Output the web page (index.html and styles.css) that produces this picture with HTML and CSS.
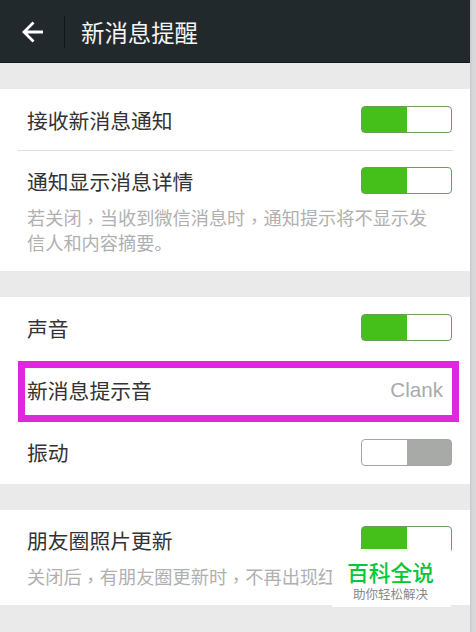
FILE: index.html
```
<!DOCTYPE html>
<html lang="zh-CN">
<head>
  <meta charset="UTF-8">
  <meta name="viewport" content="width=device-width, initial-scale=1.0">
  <title>新消息提醒</title>
  <link rel="stylesheet" href="styles.css">
</head>
<body>
  <div class="screen">
    <header>
      <svg class="back" width="22" height="22" viewBox="0 0 22 22">
        <path d="M21 11H2M11.5 1.5L2 11l9.5 9.5" />
      </svg>
      <h1>新消息提醒</h1>
    </header>

    <section class="group">
      <div class="row divided">
        <span class="label">接收新消息通知</span>
        <span class="switch on"></span>
      </div>
      <div class="row tight">
        <span class="label">通知显示消息详情</span>
        <span class="switch on"></span>
      </div>
      <p class="hint">若关闭<span class="comma" lang="zh-TW">，</span>当收到微信消息时<span class="comma" lang="zh-TW">，</span>通知提示将不显示发<br>信人和内容摘要。</p>
    </section>

    <section class="group sounds">
      <div class="row">
        <span class="label">声音</span>
        <span class="switch on"></span>
      </div>
      <div class="row highlight">
        <span class="label">新消息提示音</span>
        <span class="value">Clank</span>
      </div>
      <div class="row">
        <span class="label">振动</span>
        <span class="switch"></span>
      </div>
    </section>

    <section class="group moments">
      <div class="row tight">
        <span class="label">朋友圈照片更新</span>
        <span class="switch on"></span>
      </div>
      <p class="hint">关闭后<span class="comma" lang="zh-TW">，</span>有朋友圈更新时<span class="comma" lang="zh-TW">，</span>不再出现红</p>
      <div class="badge">
        <strong>百科全说</strong>
        <small>助你轻松解决</small>
      </div>
    </section>
  </div>
</body>
</html>
```

FILE: styles.css
```
*,
*::before,
*::after {
  margin: 0;
  padding: 0;
  box-sizing: border-box;
}

body {
  height: 632px;
  overflow: hidden;
  background: linear-gradient(to right, #c9c9cb 470px, #d9d9db 473px);
  font-family: 'Noto Sans CJK SC', sans-serif;
}

.screen {
  width: 470px;
  height: 632px;
  background-color: #eaeaea;
  display: flex;
  flex-direction: column;
  gap: 26px;
}

header {
  height: 63px;
  flex: none;
  display: flex;
  align-items: center;
  padding: 2px 0 0 22px;
  background-color: #22292c;
  border-bottom: 1px solid #15191c;
}

.back {
  fill: none;
  stroke: #fff;
  stroke-width: 2.8;
}

header h1 {
  display: flex;
  align-items: center;
  height: 32px;
  margin-left: 20px;
  padding-left: 16px;
  border-left: 1px solid #12181a;
  color: #f4f4f4;
  font-size: 23.4px;
  font-weight: 400;
}

.group {
  position: relative;
  flex: none;
  height: 182px;
  background-color: #fff;
}

.group.sounds {
  height: 187px;
}

.group.moments {
  height: 95px;
}

.row {
  position: relative;
  display: flex;
  align-items: center;
  justify-content: space-between;
  height: 62.4px;
  padding: 0 18px 1px 27px;
}

.row.divided::after {
  content: '';
  position: absolute;
  left: 18px;
  right: 17px;
  bottom: 0;
  height: 1px;
  background-color: #dedede;
}

.row.tight {
  height: 59px;
  padding-bottom: 0;
}

.label {
  color: #333;
  font-size: 20.8px;
  line-height: 30px;
}

.value {
  padding-right: 9px;
  color: #aaa;
  font-family: 'Liberation Sans', Arial, sans-serif;
  font-size: 20.6px;
}

.hint {
  margin-top: -5px;
  padding-left: 27px;
  color: #b0b0b0;
  font-size: 18.2px;
  line-height: 25px;
  white-space: nowrap;
}

.comma {
  font-family: 'Noto Sans CJK TC', sans-serif;
  line-height: 0;
  vertical-align: -3px;
}

.switch {
  width: 91px;
  height: 27px;
  border: 1px solid #a3a6a3;
  border-radius: 4px;
  background: linear-gradient(to right, #fff 50%, #a7aaa7 50%);
}

.switch.on {
  border-color: #6f9a63;
  background: linear-gradient(to right, #45c01a 50%, #fff 50%);
}

.highlight::after {
  content: '';
  position: absolute;
  top: 2px;
  left: 18px;
  width: 441px;
  height: 61px;
  border: 7px solid #dd28dc;
}

.badge {
  position: absolute;
  left: 332px;
  top: 39px;
  width: 119px;
  height: 58px;
  padding: 8px 2px 0 0;
  background-color: #fff;
  text-align: center;
}

.badge strong,
.badge small {
  display: block;
}

.badge strong {
  color: #05c73c;
  font-size: 21.8px;
  font-weight: 500;
  line-height: 29px;
}

.badge small {
  color: #888;
  font-size: 12.5px;
  line-height: 15px;
}
```
